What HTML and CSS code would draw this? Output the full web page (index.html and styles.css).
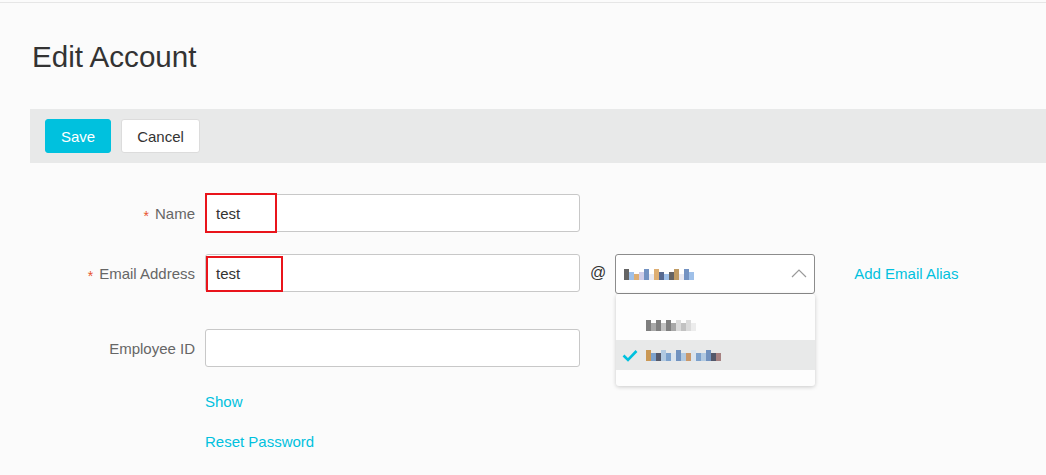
FILE: index.html
```html
<!DOCTYPE html>
<html>
<head>
<meta charset="utf-8">
<link rel="stylesheet" href="styles.css">
</head>
<body>
<div class="page">
  <div class="main">
    <h1 class="title">Edit Account</h1>
    <div class="toolbar">
      <button class="btn btn-primary">Save</button>
      <button class="btn btn-default">Cancel</button>
    </div>
    <div class="form">
      <div class="row">
        <label class="label"><span class="req">*</span>Name</label>
        <div class="field">
          <div class="input">test</div>
          <div class="mark mark-name"></div>
        </div>
      </div>
      <div class="row row-email">
        <label class="label"><span class="req">*</span>Email Address</label>
        <div class="field">
          <div class="input">test</div>
          <div class="mark mark-email"></div>
        </div>
        <span class="at">@</span>
        <div class="select-wrap">
          <div class="select">
            <span class="mosaic m-sel">
              <i class="c1"></i><i class="c2"></i><i class="c3"></i><i class="c4"></i><i class="c5"></i><i class="c6"></i><i class="c3"></i><i class="c7"></i><i class="c2"></i><i class="c1"></i><i class="c8"></i><i class="c6"></i><i class="c5"></i><i class="c2"></i>
            </span>
            <svg class="chev" width="16" height="10" viewBox="0 0 16 10"><polyline points="1,9 8,2 15,9" fill="none" stroke="#9a9a9a" stroke-width="1.2"/></svg>
          </div>
          <ul class="menu">
            <li class="item"><span class="mosaic m-gray"><i class="g1"></i><i class="g2"></i><i class="g1"></i><i class="g3"></i><i class="g1"></i><i class="g2"></i><i class="g4"></i><i class="g3"></i><i class="g4"></i><i class="g5"></i></span></li>
            <li class="item item-active">
              <svg class="check" width="16" height="13" viewBox="0 0 16 13"><polyline points="1.5,6.5 6,11 14.5,2" fill="none" stroke="#00c1de" stroke-width="2.6"/></svg>
              <span class="mosaic m-col"><i class="k1"></i><i class="k2"></i><i class="k3"></i><i class="k4"></i><i class="k2"></i><i class="k5"></i><i class="k6"></i><i class="k4"></i><i class="k7"></i><i class="k5"></i><i class="k2"></i><i class="k4"></i><i class="k6"></i><i class="k3"></i><i class="k8"></i></span>
            </li>
          </ul>
        </div>
        <a class="link alias">Add Email Alias</a>
      </div>
      <div class="row row-emp">
        <label class="label">Employee ID</label>
        <div class="field">
          <div class="input"></div>
        </div>
      </div>
      <div class="links">
        <a class="link">Show</a>
        <a class="link">Reset Password</a>
      </div>
    </div>
  </div>
</div>
</body>
</html>
```
FILE: styles.css
```css
* { box-sizing: border-box; }
html, body { margin: 0; padding: 0; }
body {
  background: #fbfbfb;
  font-family: "Liberation Sans", Arial, sans-serif;
  color: #333;
  width: 1046px;
  height: 475px;
  overflow: hidden;
}
.page {
  padding-top: 2px;
}
.main {
  border-top: 1px solid #e6e6e6;
  padding-left: 30px;
}
.title {
  margin: 37px 0 0 2px;
  font-size: 29.6px;
  font-weight: normal;
  line-height: 34px;
  color: #333;
}
.toolbar {
  margin-top: 35px;
  height: 54px;
  background: #e8e9e9;
  padding: 10px 15px;
  display: flex;
  gap: 10px;
}
.btn {
  height: 34px;
  font-family: "Liberation Sans", Arial, sans-serif;
  font-size: 15px;
  border-radius: 3px;
  padding: 0 15px;
  cursor: pointer;
}
.btn-primary {
  background: #00c1de;
  color: #fff;
  border: 1px solid #00c1de;
  width: 66px;
}
.btn-default {
  background: #fff;
  color: #333;
  border: 1px solid #dcdcdc;
  width: 79px;
}
.form {
  padding-top: 31px;
}
.row {
  display: flex;
  align-items: flex-start;
  margin-bottom: 22px;
}
.row-email {
  margin-bottom: 35px;
}
.label {
  width: 175px;
  height: 38px;
  padding-right: 10px;
  text-align: right;
  font-size: 15px;
  line-height: 39px;
  color: #666;
  flex: none;
}
.req {
  color: #e8542e;
  margin-right: 6px;
  font-size: 14px;
  position: relative;
  top: 2px;
}
.field {
  position: relative;
  width: 375px;
  flex: none;
}
.input {
  height: 38px;
  border: 1px solid #c8c8c8;
  border-radius: 3px;
  background: #fff;
  padding: 0 10px;
  font-size: 15px;
  line-height: 37px;
  color: #333;
}
.mark {
  position: absolute;
  border: 2px solid #e9141b;
}
.mark-name { left: 0; top: -1px; width: 72px; height: 40px; }
.mark-email { left: 1px; top: 2px; width: 77px; height: 36px; }
.at {
  margin: 0 9px 0 10px;
  font-size: 16px;
  line-height: 38px;
  color: #333;
}
.select-wrap {
  position: relative;
  width: 200px;
}
.select {
  height: 40px;
  border: 1px solid #8c8c8c;
  border-radius: 3px;
  background: #fff;
  display: flex;
  align-items: center;
  padding: 0 7px 0 8px;
  justify-content: space-between;
}
.chev { margin-top: -2px; }
.menu {
  position: absolute;
  left: 1px;
  top: 40px;
  width: 199px;
  margin: 0;
  padding: 16px 0;
  list-style: none;
  background: #fdfdfd;
  border-radius: 3px;
  box-shadow: 0 1px 4px rgba(0,0,0,0.2);
}
.item {
  height: 30px;
  display: flex;
  align-items: center;
  padding-left: 30px;
}
.item-active {
  background: #e8e9e9;
  padding-left: 6px;
}
.check { margin-right: 8px; }
.mosaic {
  display: inline-flex;
  align-items: flex-end;
  height: 12px;
  opacity: 0.85;
}
.mosaic i {
  display: block;
  width: 5px;
  height: 8px;
}
.m-sel i:nth-child(odd) { height: 11px; }
.m-sel i:nth-child(3n) { height: 6px; }
.c1 { background: #4a4a4a; }
.c2 { background: #8fb6e6; }
.c3 { background: #d9a05b; }
.c4 { background: #c9c6e6; }
.c5 { background: #5b7fb8; }
.c6 { background: #e6e6f0; }
.c7 { background: #3c4f7c; }
.c8 { background: #b58a4a; }
.m-gray i:nth-child(odd) { height: 11px; }
.g1 { background: #6a6a6a; }
.g2 { background: #9a9a9a; }
.g3 { background: #b8b8b8; }
.g4 { background: #d6d6d6; }
.g5 { background: #eaeaea; }
.m-col i:nth-child(3n+1) { height: 11px; }
.k1 { background: #c58a3c; }
.k2 { background: #6a95c8; }
.k3 { background: #3a3f55; }
.k4 { background: #a8c4e0; }
.k5 { background: #d8e4ef; }
.k6 { background: #5d84b8; }
.k7 { background: #c48a55; }
.k8 { background: #9b7070; }
.link {
  color: #00c1de;
  font-size: 15px;
  text-decoration: none;
  cursor: pointer;
}
.alias {
  margin-left: 39px;
  line-height: 40px;
}
.links {
  padding-left: 175px;
  display: flex;
  flex-direction: column;
  align-items: flex-start;
  gap: 23px;
  margin-top: 26px;
}
```
